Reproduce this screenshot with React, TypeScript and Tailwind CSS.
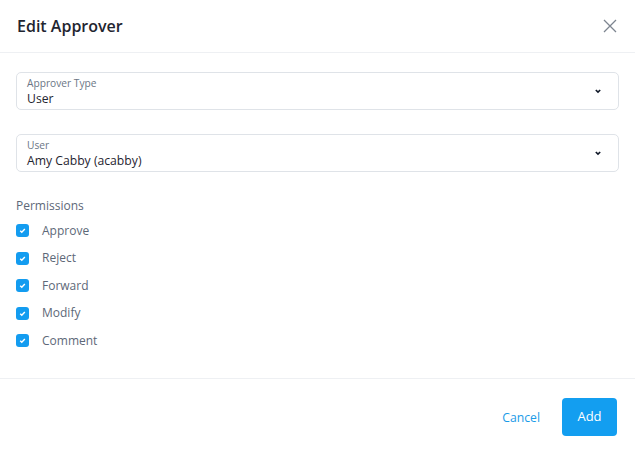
import { useState } from "react";

const permissions = ["Approve", "Reject", "Forward", "Modify", "Comment"];

function Chevron() {
  return (
    <svg width="10" height="10" viewBox="0 0 10 10" className="text-gray-900">
      <path d="M2.8 4 L5 6.1 L7.2 4" fill="none" stroke="currentColor" strokeWidth="1.6" />
    </svg>
  );
}

function SelectBox({ label, value }: { label: string; value: string }) {
  return (
    <div className="flex h-[38px] items-center justify-between rounded-[5px] border border-[#dfe3e8] pl-[10px] pr-[15px]">
      <div className="flex flex-col pt-[1px]">
        <span className="text-[10.2px] leading-[13px] text-[#6b7685]">{label}</span>
        <span className="text-[12.2px] leading-[17px] text-[#1f2530]">{value}</span>
      </div>
      <Chevron />
    </div>
  );
}

function CheckItem({ label, checked, onToggle }: { label: string; checked: boolean; onToggle: () => void }) {
  return (
    <label className="flex h-[27.5px] cursor-pointer items-center gap-[13px]" onClick={onToggle}>
      <span
        className={
          checked
            ? "flex h-[13px] w-[13px] items-center justify-center rounded-[3px] bg-[#139cf0]"
            : "flex h-[13px] w-[13px] items-center justify-center rounded-[3px] border border-[#c5ccd4] bg-white"
        }
      >
        {checked && (
          <svg width="9" height="9" viewBox="0 0 10 10">
            <path d="M2.5 5.3 L4.2 7 L7.6 3.4" fill="none" stroke="white" strokeWidth="1.6" />
          </svg>
        )}
      </span>
      <span className="text-[12px] text-[#5d6878]">{label}</span>
    </label>
  );
}

export default function App() {
  const [checked, setChecked] = useState<boolean[]>(permissions.map(() => true));

  return (
    <div className="flex h-[454px] w-[635px] flex-col bg-white font-['Open_Sans',sans-serif]">
      <div className="flex h-[53px] items-center justify-between border-b border-[#eef0f3] pl-[17px] pr-[18px]">
        <h1 className="text-[16px] font-semibold text-[#1f2530]">Edit Approver</h1>
        <svg width="14" height="14" viewBox="0 0 14 14" className="text-[#7d8590]">
          <path d="M1 1 L13 13 M13 1 L1 13" stroke="currentColor" strokeWidth="1.3" />
        </svg>
      </div>

      <div className="flex flex-col px-4 pt-[19px]">
        <SelectBox label="Approver Type" value="User" />
        <div className="mt-6">
          <SelectBox label="User" value="Amy Cabby (acabby)" />
        </div>
        <p className="mt-[25px] text-[12px] text-[#5d6878]">Permissions</p>
        <div className="mt-[2px] flex flex-col">
          {permissions.map((p, i) => (
            <CheckItem
              key={p}
              label={p}
              checked={checked[i]}
              onToggle={() => setChecked((prev) => prev.map((c, j) => (j === i ? !c : c)))}
            />
          ))}
        </div>
      </div>

      <div className="mt-auto flex h-[76px] items-center justify-end gap-[22px] border-t border-[#eef0f3] pr-[18px]">
        <button className="px-0 pt-[3px] text-[12.2px] text-[#1a9be8]">Cancel</button>
        <button className="h-[38px] w-[55px] rounded-[4px] bg-[#139ef0] text-[13px] text-white">Add</button>
      </div>
    </div>
  );
}
